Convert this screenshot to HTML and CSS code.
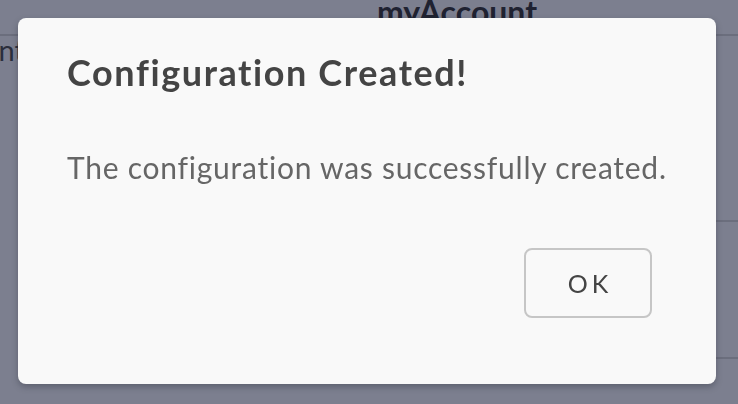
FILE: index.html
```html
<!DOCTYPE html>
<html lang="en">
<head>
<meta charset="utf-8">
<title>Configuration Created</title>
<link rel="stylesheet" href="styles.css">
</head>
<body>
<div class="page">
  <header class="page-header">
    <h1 class="brand">myAccount</h1>
  </header>
  <div class="page-body">
    <div class="side-label"><span>Account</span></div>
    <div class="rows">
      <div class="row"></div>
      <div class="row row-short"></div>
    </div>
  </div>
</div>
<div class="overlay">
  <div class="dialog" role="dialog" aria-labelledby="dlg-title">
    <h2 class="dialog-title" id="dlg-title">Configuration Created!</h2>
    <p class="dialog-text">The configuration was successfully created.</p>
    <div class="dialog-actions">
      <button class="btn-ok" type="button">OK</button>
    </div>
  </div>
</div>
</body>
</html>
```

FILE: styles.css
```css
html, body {
  margin: 0;
  padding: 0;
  height: 100%;
}
body {
  background: #7c7f8f;
  font-family: Lato, "Open Sans", sans-serif;
  overflow: hidden;
}
.page {
  width: 738px;
  height: 404px;
  display: flex;
  flex-direction: column;
}
.page-header {
  height: 36px;
  border-bottom: 2px solid #6b6e7d;
  display: flex;
  align-items: flex-end;
  padding-left: 377px;
  box-sizing: border-box;
}
.brand {
  margin: 0 0 12px 0;
  font-size: 32px;
  font-weight: 700;
  line-height: 20px;
  color: #1f2231;
}
.page-body {
  flex: 1;
  display: flex;
}
.side-label {
  font-size: 29px;
  color: #2b2e3c;
  margin-top: -4px;
  width: 25px;
  flex: none;
  display: flex;
  justify-content: flex-end;
  align-items: flex-start;
  white-space: nowrap;
}
.rows {
  flex: 1;
  display: flex;
  flex-direction: column;
  padding-top: 184px;
}
.row {
  height: 135px;
  border-top: 2px solid #6b6e7d;
}
.row-short {
  height: 40px;
}
.overlay {
  position: fixed;
  inset: 0;
}
.dialog {
  position: absolute;
  left: 18px;
  top: 18px;
  width: 698px;
  height: 366px;
  box-sizing: border-box;
  background: #f9f9f9;
  border-radius: 8px;
  box-shadow: 0 3px 6px rgba(40, 42, 55, 0.35);
  padding: 0 20px 0 49px;
  display: flex;
  flex-direction: column;
}
.dialog-title {
  margin: 30px 0 0 0;
  font-size: 36px;
  font-weight: 700;
  letter-spacing: 1.6px;
  line-height: 48px;
  color: #444444;
  white-space: nowrap;
}
.dialog-text {
  margin: 51px 0 0 0;
  font-size: 30px;
  letter-spacing: 0.75px;
  line-height: 40px;
  color: #666666;
  white-space: nowrap;
}
.dialog-actions {
  display: flex;
  justify-content: flex-end;
  margin-top: 61px;
  padding-right: 44px;
}
.btn-ok {
  width: 128px;
  height: 70px;
  box-sizing: border-box;
  background: #f9f9f9;
  border: 2px solid #c6c6c6;
  border-radius: 8px;
  font-family: Lato, "Open Sans", sans-serif;
  font-size: 25px;
  letter-spacing: 4px;
  padding: 0 0 0 4px;
  color: #444444;
}
```
